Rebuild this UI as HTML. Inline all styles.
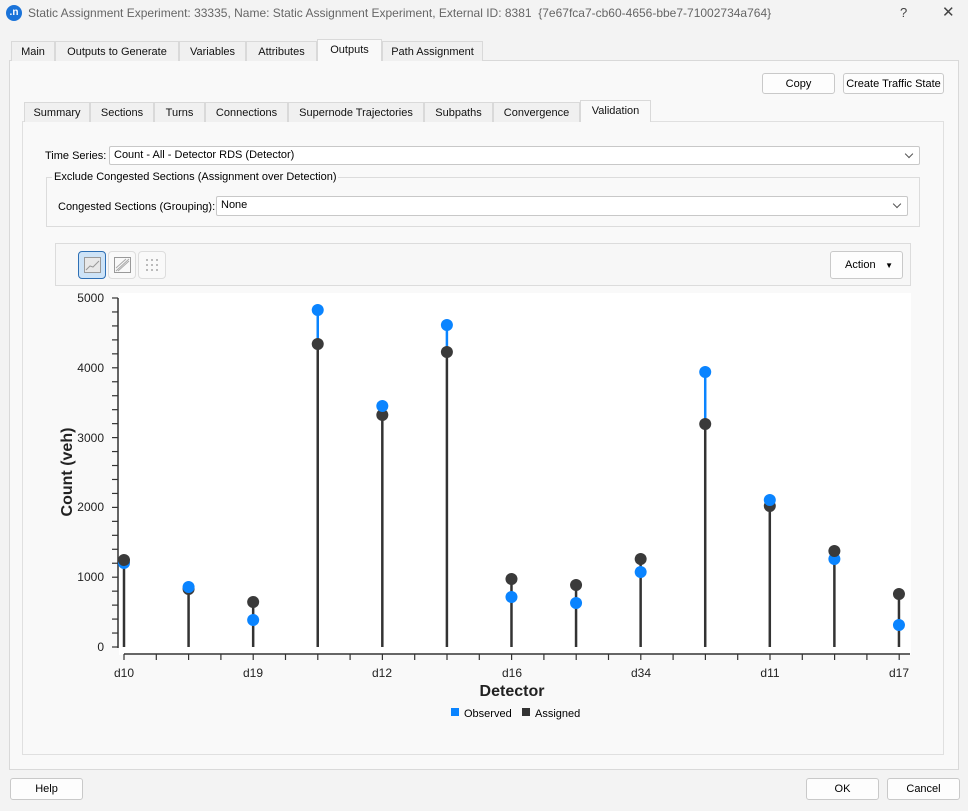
<!DOCTYPE html>
<html><head><meta charset="utf-8"><style>
*{box-sizing:border-box}
body{margin:0;width:968px;height:811px;background:#f3f3f3;font-family:"Liberation Sans",sans-serif;font-size:11px;color:#000;position:relative;overflow:hidden}
.a{position:absolute}
.tab{position:absolute;height:20px;border:1px solid #d9d9d9;border-bottom:none;background:#f0f0f0;text-align:center;line-height:20px;font-size:11px;color:#111}
.tab.sel{background:#f9f9f9;height:22px;top:-2px}
.btn{position:absolute;background:#fdfdfd;border:1px solid #c9c9c9;border-radius:3px;text-align:center;font-size:11px}
.combo{position:absolute;background:#fff;border:1px solid #c8c8c8;border-radius:2px;font-size:11px;padding-left:4px;line-height:17px}
.combo:after{content:"";position:absolute;right:7px;top:4px;width:5px;height:5px;border-right:1px solid #555;border-bottom:1px solid #555;transform:rotate(45deg)}
</style></head><body>
<div class="a" style="left:0;top:0;width:968px;height:26px;background:#f3f3f3"></div>
<div class="a" style="left:6px;top:5px;width:16px;height:16px;border-radius:50%;background:#1a73d9;color:#fff;font-size:10px;font-weight:bold;text-align:center;line-height:15px">.n</div>
<div class="a" style="left:28px;top:6px;font-size:12px;color:#666">Static Assignment Experiment: 33335, Name: Static Assignment Experiment, External ID: 8381 &nbsp;{7e67fca7-cb60-4656-bbe7-71002734a764}</div>
<div class="a" style="left:900px;top:5px;font-size:13px;color:#444">?</div>
<div class="a" style="left:942px;top:3px;font-size:15px;color:#444">✕</div>

<div class="a" style="left:9px;top:60px;width:950px;height:710px;background:#f9f9f9;border:1px solid #d9d9d9"></div>
<div class="a" style="left:0;top:41px">
<div class="tab" style="left:11px;width:44px;top:0">Main</div>
<div class="tab" style="left:55px;width:124px;top:0">Outputs to Generate</div>
<div class="tab" style="left:179px;width:67px;top:0">Variables</div>
<div class="tab" style="left:246px;width:71px;top:0">Attributes</div>
<div class="tab sel" style="left:317px;width:65px">Outputs</div>
<div class="tab" style="left:382px;width:101px;top:0">Path Assignment</div>
</div>
<div class="btn" style="left:762px;top:73px;width:73px;height:21px;line-height:20px">Copy</div>
<div class="btn" style="left:843px;top:73px;width:101px;height:21px;line-height:20px">Create Traffic State</div>

<div class="a" style="left:22px;top:121px;width:922px;height:634px;background:#f9f9f9;border:1px solid #e0e0e0"></div>
<div class="a" style="left:0;top:102px">
<div class="tab" style="left:24px;width:66px;top:0">Summary</div>
<div class="tab" style="left:90px;width:64px;top:0">Sections</div>
<div class="tab" style="left:154px;width:51px;top:0">Turns</div>
<div class="tab" style="left:205px;width:83px;top:0">Connections</div>
<div class="tab" style="left:288px;width:136px;top:0">Supernode Trajectories</div>
<div class="tab" style="left:424px;width:69px;top:0">Subpaths</div>
<div class="tab" style="left:493px;width:87px;top:0">Convergence</div>
<div class="tab sel" style="left:580px;width:71px">Validation</div>
</div>

<div class="a" style="left:45px;top:150px">Time Series:</div>
<div class="combo" style="left:109px;top:146px;width:811px;height:19px">Count - All - Detector RDS (Detector)</div>
<div class="a" style="left:46px;top:177px;width:874px;height:50px;border:1px solid #dcdcdc"></div>
<div class="a" style="left:52px;top:171px;background:#f9f9f9;padding:0 2px">Exclude Congested Sections (Assignment over Detection)</div>
<div class="a" style="left:58px;top:201px">Congested Sections (Grouping):</div>
<div class="combo" style="left:216px;top:196px;width:692px;height:20px">None</div>

<div class="a" style="left:55px;top:243px;width:856px;height:43px;border:1px solid #dcdcdc;background:#f7f7f7"></div>
<div class="a" style="left:78px;top:251px;width:28px;height:28px;border:1px solid #2d6fb5;border-radius:4px;background:#cde3f7"></div>
<div class="a" style="left:108px;top:251px;width:28px;height:28px;border:1px solid #ddd;border-radius:4px;background:#f9f9f9"></div>
<div class="a" style="left:138px;top:251px;width:28px;height:28px;border:1px solid #ddd;border-radius:4px;background:#f9f9f9"></div>
<svg class="a" style="left:0;top:0" width="200" height="300">
<rect x="84.5" y="257.5" width="16" height="15" fill="#e8e8e8" stroke="#999"/>
<path d="M86 270 L90 266 L93 267 L99 261" stroke="#999" fill="none"/>
<rect x="114.5" y="257.5" width="16" height="15" fill="none" stroke="#999"/>
<path d="M116 271 L129 259 M118 271 L129 261 M116 268 L126 259" stroke="#aaa" fill="none"/>
<g fill="#bbb"><rect x="146" y="259" width="2" height="2"/><rect x="151" y="259" width="2" height="2"/><rect x="156" y="259" width="2" height="2"/><rect x="146" y="264" width="2" height="2"/><rect x="151" y="264" width="2" height="2"/><rect x="156" y="264" width="2" height="2"/><rect x="146" y="269" width="2" height="2"/><rect x="151" y="269" width="2" height="2"/><rect x="156" y="269" width="2" height="2"/></g>
</svg>
<div class="btn" style="left:830px;top:251px;width:73px;height:28px;line-height:27px;text-align:left;padding-left:14px">Action<span style="position:absolute;right:9px;top:0;font-size:8px">▼</span></div>

<svg class="a" style="left:0;top:0" width="968" height="811">
<rect x="119" y="293" width="792" height="362" fill="#fff"/>
<g stroke="#333" stroke-width="1.5" fill="none">
<line x1="118" y1="298" x2="118" y2="648"/>
<line x1="124" y1="654" x2="910" y2="654"/>
</g>
<g stroke="#333" stroke-width="1.2" id="yt"></g>
<g font-size="12" fill="#222" text-anchor="end">
<text x="104" y="302">5000</text><text x="104" y="372">4000</text><text x="104" y="442">3000</text><text x="104" y="511">2000</text><text x="104" y="581">1000</text><text x="104" y="651">0</text>
</g>
<g font-size="12" fill="#222" text-anchor="middle">
<text x="124" y="677">d10</text><text x="253" y="677">d19</text><text x="382" y="677">d12</text><text x="512" y="677">d16</text><text x="641" y="677">d34</text><text x="770" y="677">d11</text><text x="899" y="677">d17</text>
</g>
<text x="512" y="696" font-size="16" font-weight="bold" text-anchor="middle" fill="#222">Detector</text>
<text transform="translate(72,472) rotate(-90)" font-size="16" font-weight="bold" text-anchor="middle" fill="#222">Count (veh)</text>
<rect x="451" y="708" width="8" height="8" fill="#0a84ff"/><text x="464" y="717" font-size="11">Observed</text>
<rect x="522" y="708" width="8" height="8" fill="#333"/><text x="535" y="717" font-size="11">Assigned</text>
<g id="pts"></g>
</svg>
<div class="btn" style="left:10px;top:778px;width:73px;height:22px;line-height:21px">Help</div>
<div class="btn" style="left:806px;top:778px;width:73px;height:22px;line-height:21px">OK</div>
<div class="btn" style="left:887px;top:778px;width:73px;height:22px;line-height:21px">Cancel</div>
<script>
var ns="http://www.w3.org/2000/svg";
function el(p,t,a){var e=document.createElementNS(ns,t);for(var k in a)e.setAttribute(k,a[k]);p.appendChild(e);}
var yt=document.getElementById("yt");
for(var i=0;i<=25;i++){var y=647-i*13.96;el(yt,"line",{x1:112,y1:y,x2:118,y2:y});}
for(var i=0;i<=24;i++){var x=124+i*32.3;el(yt,"line",{x1:x,y1:654,x2:x,y2:660});}
var d=[[563,560],[587,589],[620,602],[310,344],[406,415],[325,352],[597,579],[603,585],[572,559],[372,424],[500,506],[559,551],[625,594]];
var g=document.getElementById("pts");
d.forEach(function(p,i){var x=124+i*64.58;var o=p[0],a=p[1];
el(g,"line",{x1:x,y1:647,x2:x,y2:a,stroke:"#333","stroke-width":2.5});
if(o<a)el(g,"line",{x1:x,y1:a,x2:x,y2:o,stroke:"#0a84ff","stroke-width":2.5});
if(o>=a){el(g,"circle",{cx:x,cy:o,r:6,fill:"#0a84ff"});el(g,"circle",{cx:x,cy:a,r:6,fill:"#3a3a3a"});}
else{el(g,"circle",{cx:x,cy:a,r:6,fill:"#3a3a3a"});el(g,"circle",{cx:x,cy:o,r:6,fill:"#0a84ff"});}
});
</script>
</body></html>
